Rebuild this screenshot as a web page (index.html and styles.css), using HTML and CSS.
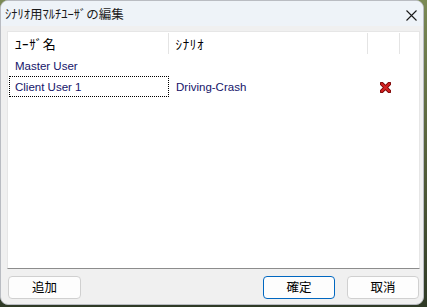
FILE: index.html
```html
<!DOCTYPE html>
<html lang="ja">
<head>
<meta charset="utf-8">
<link rel="stylesheet" href="styles.css">
</head>
<body>
<div class="window">
  <div class="titlebar">
    <span class="title">ｼﾅﾘｵ用ﾏﾙﾁﾕｰｻﾞの編集</span>
    <svg class="close" width="11" height="11" viewBox="0 0 11 11"><path d="M0.5 0.5 L10.5 10.5 M10.5 0.5 L0.5 10.5" stroke="#1a1a1a" stroke-width="1.1" fill="none"/></svg>
  </div>
  <div class="content">
    <div class="list">
      <div class="row header">
        <div class="cell c1 jp">ﾕｰｻﾞ名</div>
        <div class="cell c2 jp">ｼﾅﾘｵ</div>
        <div class="cell c3"></div>
        <div class="cell c4"></div>
      </div>
      <div class="row item">
        <div class="cell c1">Master User</div>
        <div class="cell c2"></div>
        <div class="cell c3"></div>
      </div>
      <div class="row item">
        <div class="cell c1 focus">Client User 1</div>
        <div class="cell c2">Driving-Crash</div>
        <div class="cell c3 icon">
          <svg width="11" height="11" viewBox="0 0 10 10"><path d="M1.5 1.5 L8.5 8.5 M8.5 1.5 L1.5 8.5" stroke="#7a0a0a" stroke-width="3.6" stroke-linecap="square" fill="none"/><path d="M1.8 1.8 L8.2 8.2 M8.2 1.8 L1.8 8.2" stroke="#d42222" stroke-width="2" stroke-linecap="square" fill="none"/></svg>
        </div>
      </div>
    </div>
    <div class="buttons">
      <button class="btn">追加</button>
      <span class="spacer"></span>
      <button class="btn primary">確定</button>
      <button class="btn">取消</button>
    </div>
  </div>
</div>
</body>
</html>
```
FILE: styles.css
```css
* { box-sizing: border-box; }
html, body { margin: 0; padding: 0; }
body {
  width: 427px;
  height: 307px;
  overflow: hidden;
  background: linear-gradient(180deg, #7b8a55 0%, #55603a 50%, #2f3a26 100%);
}
.window {
  width: 424px;
  height: 305px;
  background: #f0f0f0;
  border: 1px solid #b9bcc2;
  border-radius: 8px;
  overflow: hidden;
  display: flex;
  flex-direction: column;
}
.titlebar {
  height: 25px;
  background: #eef3f8;
  display: flex;
  align-items: center;
  padding-left: 4px;
  padding-right: 6px;
  flex: none;
}
.title {
  font-family: "Noto Sans CJK JP", sans-serif;
  font-size: 12.5px;
  color: #1a1a1a;
  line-height: 1;
  margin-top: 1px;
  flex: 1;
}
.close { margin-top: 3px; }
.content {
  flex: 1;
  padding: 5px 3px 0 6px;
  display: flex;
  flex-direction: column;
}
.list {
  height: 238px;
  background: #fff;
  border: 1px solid #e6e6e6;
  border-bottom-color: #8c8c8c;
  flex: none;
}
.row {
  display: flex;
  height: 21px;
  align-items: center;
}
.row.header { height: 22px; margin-bottom: 1px; }
.cell {
  font-family: "Liberation Sans", "Noto Sans CJK JP", sans-serif;
  font-size: 11.5px;
  color: #14146a;
  white-space: nowrap;
  height: 100%;
  display: flex;
  align-items: center;
}
.item .cell { padding-top: 1px; }
.jp {
  font-family: "Noto Sans CJK JP", sans-serif;
  font-size: 13px;
  letter-spacing: 0.6px;
  color: #000;
}
.c1 { width: 161px; padding-left: 7px; }
.c2 { width: 200px; padding-left: 7px; }
.c3 { width: 32px; }
.c4 { width: 19px; }
.header .cell { border-right: 1px solid #e4e4e4; height: 21px; margin-top: 1px; }
.header .c4 { border-right: none; }
.focus {
  outline: 1px dotted #000;
  outline-offset: -1px;
  width: 160px;
  margin-left: 1px;
  padding-left: 6px;
}
.icon { justify-content: center; padding-left: 0; }
.buttons {
  display: flex;
  margin-top: 7px;
  padding-left: 1px;
  padding-right: 1px;
  gap: 12px;
}
.spacer { flex: 1; }
.btn {
  height: 23px;
  width: 73px;
  background: #fdfdfd;
  border: 1px solid #d0d0d0;
  border-radius: 4px;
  font-family: "Noto Sans CJK JP", sans-serif;
  font-size: 12.5px;
  color: #000;
  padding: 0;
  line-height: 1;
}
.btn.primary { border: 1px solid #0067c0; width: 72px; }
.btn:last-child { width: 72px; }
```
